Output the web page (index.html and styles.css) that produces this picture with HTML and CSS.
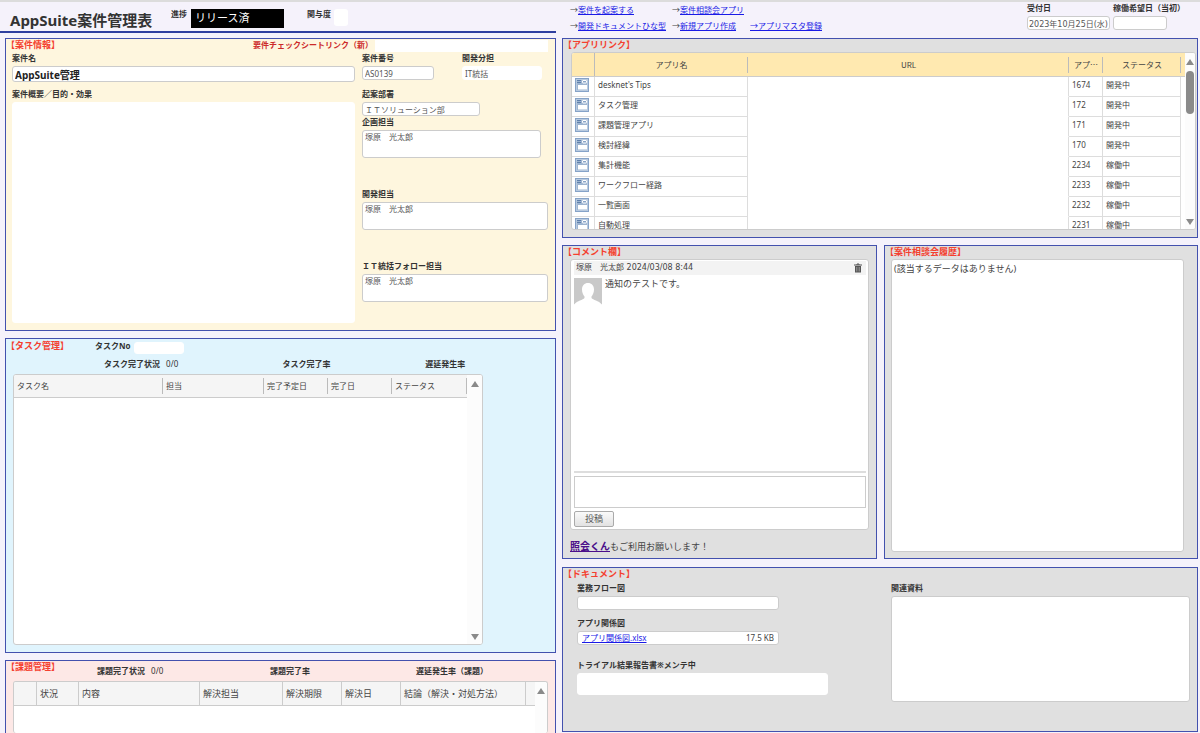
FILE: index.html
```
<!DOCTYPE html>
<html lang="ja">
<head>
  <meta charset="UTF-8" />
  <meta name="viewport" content="width=device-width, initial-scale=1.0"/>
  <title>AppSuite案件管理表</title>
  <link rel="stylesheet" href="styles.css">
</head>
<body>
  <svg width="0" height="0" class="sprite">
    <symbol id="app-icon" viewBox="0 0 14 14">
      <rect width="14" height="14" fill="#86a3c8"/>
      <rect x="1" y="1" width="12" height="12" fill="#b9cadf"/>
      <rect x="2" y="2" width="10" height="10" fill="#9db4d1"/>
      <path d="M2 2.500h4M2 4.500h4" stroke="#5f80ab" stroke-width="1"/>
      <rect x="7.500" y="2.500" width="4" height="2.500" rx=".5" fill="#8aa5c8" stroke="#fff" stroke-width="1"/>
      <rect x="3" y="7" width="9" height="4.500" fill="#fff"/>
    </symbol>
  </svg>

  <div class="page">
    <div class="left">
      <header class="title-bar">
        <h1>AppSuite案件管理表</h1>
        <span class="label">進捗</span>
        <span class="status">リリース済</span>
        <label class="label" for="level">関与度</label>
        <input class="level" id="level" type="text">
      </header>

      <section class="panel info">
        <div class="panel-head">
          <h2>【案件情報】</h2>
          <label class="label sheet-label" for="sheet">要件チェックシートリンク（新）</label>
          <input class="plain sheet" id="sheet" type="text">
        </div>
        <div class="info-body">
          <div class="info-main">
            <label class="label" for="name">案件名</label>
            <input class="box name" id="name" type="text" value="AppSuite管理">
            <label class="label" for="summary">案件概要／目的・効果</label>
            <textarea class="plain summary" id="summary"></textarea>
          </div>
          <div class="info-side">
            <div class="pair">
              <div class="number">
                <label class="label" for="number">案件番号</label>
                <input class="box" id="number" type="text" value="AS0139">
              </div>
              <div class="section">
                <label class="label" for="section">開発分担</label>
                <input class="plain" id="section" type="text" value="IT統括">
              </div>
            </div>
            <label class="label" for="dept">起案部署</label>
            <input class="box dept" id="dept" type="text" value="ＩＴソリューション部">
            <label class="label" for="planner">企画担当</label>
            <textarea class="box person planner" id="planner">塚原　光太郎</textarea>
            <label class="label" for="developer">開発担当</label>
            <textarea class="box person" id="developer">塚原　光太郎</textarea>
            <label class="label" for="follow">ＩＴ統括フォロー担当</label>
            <textarea class="box person" id="follow">塚原　光太郎</textarea>
          </div>
        </div>
      </section>

      <section class="panel task">
        <div class="panel-head">
          <h2>【タスク管理】</h2>
          <label class="label" for="taskno">タスクNo</label>
          <input class="plain taskno" id="taskno" type="text">
        </div>
        <div class="stats">
          <div><b>タスク完了状況</b> <span>0/0</span></div>
          <div><b>タスク完了率</b></div>
          <div><b>遅延発生率</b></div>
        </div>
        <div class="list task-list">
          <table>
            <thead>
              <tr>
                <th class="t-name">タスク名</th>
                <th>担当</th>
                <th class="t-date">完了予定日</th>
                <th class="t-date">完了日</th>
                <th class="t-status">ステータス</th>
              </tr>
            </thead>
          </table>
          <div class="scroll">
            <i class="up"></i>
            <i class="down"></i>
          </div>
        </div>
      </section>

      <section class="panel issue">
        <div class="panel-head">
          <h2>【課題管理】</h2>
          <div class="stats">
            <div><b>課題完了状況</b> <span>0/0</span></div>
            <div><b>課題完了率</b></div>
            <div><b>遅延発生率（課題）</b></div>
          </div>
        </div>
        <div class="list issue-list">
          <table>
            <thead>
              <tr>
                <th class="i-mark"></th>
                <th class="i-state">状況</th>
                <th>内容</th>
                <th class="i-owner">解決担当</th>
                <th class="i-date">解決期限</th>
                <th class="i-date">解決日</th>
                <th class="i-result">結論（解決・対処方法）</th>
                <th class="i-end"></th>
              </tr>
            </thead>
          </table>
          <div class="scroll">
            <i class="up"></i>
          </div>
        </div>
      </section>
    </div>

    <div class="right">
      <header class="tools">
        <nav>
          <span>→<a href="#">案件を起案する</a></span>
          <span>→<a href="#">案件相談会アプリ</a></span>
          <span></span>
          <span>→<a href="#">開発ドキュメントひな型</a></span>
          <span>→<a href="#">新規アプリ作成</a></span>
          <span><a href="#">→アプリマスタ登録</a></span>
        </nav>
        <div class="accepted">
          <label class="label" for="accepted">受付日</label>
          <input class="box" id="accepted" type="text" value="2023年10月25日(水)">
        </div>
        <div class="wish">
          <label class="label" for="wish">稼働希望日（当初）</label>
          <input class="box" id="wish" type="text">
        </div>
      </header>

      <section class="panel links">
        <h2>【アプリリンク】</h2>
        <div class="list app-list">
          <table>
            <thead>
              <tr>
                <th class="a-icon"></th>
                <th class="a-name">アプリ名</th>
                <th>URL</th>
                <th class="a-id">アプ…</th>
                <th class="a-status">ステータス</th>
                <th class="a-end"></th>
              </tr>
            </thead>
            <tbody>
              <tr><td><svg><use href="#app-icon"/></svg></td><td>desknet's Tips</td><td></td><td>1674</td><td>開発中</td><td></td></tr>
              <tr><td><svg><use href="#app-icon"/></svg></td><td>タスク管理</td><td></td><td>172</td><td>開発中</td><td></td></tr>
              <tr><td><svg><use href="#app-icon"/></svg></td><td>課題管理アプリ</td><td></td><td>171</td><td>開発中</td><td></td></tr>
              <tr><td><svg><use href="#app-icon"/></svg></td><td>検討経緯</td><td></td><td>170</td><td>開発中</td><td></td></tr>
              <tr><td><svg><use href="#app-icon"/></svg></td><td>集計機能</td><td></td><td>2234</td><td>稼働中</td><td></td></tr>
              <tr><td><svg><use href="#app-icon"/></svg></td><td>ワークフロー経路</td><td></td><td>2233</td><td>稼働中</td><td></td></tr>
              <tr><td><svg><use href="#app-icon"/></svg></td><td>一覧画面</td><td></td><td>2232</td><td>稼働中</td><td></td></tr>
              <tr><td><svg><use href="#app-icon"/></svg></td><td>自動処理</td><td></td><td>2231</td><td>稼働中</td><td></td></tr>
            </tbody>
          </table>
          <div class="scroll">
            <i class="up"></i>
            <i class="thumb"></i>
            <i class="down"></i>
          </div>
        </div>
      </section>

      <div class="middle">
        <section class="panel comments">
          <h2>【コメント欄】</h2>
          <div class="list comment-box">
            <div class="comment-list">
              <div class="comment-head">
                <span>塚原　光太郎 2024/03/08 8:44</span>
                <svg width="8" height="10" viewBox="0 0 8 10">
                  <path d="M0 2h8M3 2V1h2v1" fill="none" stroke="#555"/>
                  <path d="M1 3h6v6.500h-6z" fill="#555"/>
                  <path d="M2.800 4v4.500M5.200 4v4.500" stroke="#ccc" stroke-width=".6"/>
                </svg>
              </div>
              <div class="comment">
                <svg width="28" height="28" viewBox="0 0 28 28">
                  <rect width="28" height="28" fill="#c9c9c9"/>
                  <path d="M14 5c3.500 0 6 2.500 6 6.500 0 3-1.200 5.500-2.500 7v1.500c1.500 2 7 2.500 10.500 6.500v1.500H0v-1.500c3.500-4 9-4.500 10.500-6.500v-1.500c-1.300-1.500-2.500-4-2.500-7C8 7.500 10.500 5 14 5z" fill="#fff"/>
                </svg>
                <p>通知のテストです。</p>
              </div>
            </div>
            <textarea class="post-text" aria-label="コメント"></textarea>
            <button type="button">投稿</button>
          </div>
          <p class="note"><a href="#">照会くん</a>もご利用お願いします！</p>
        </section>

        <section class="panel history">
          <h2>【案件相談会履歴】</h2>
          <div class="list history-box">(該当するデータはありません)</div>
        </section>
      </div>

      <section class="panel docs">
        <h2>【ドキュメント】</h2>
        <div class="docs-body">
          <div>
            <label class="label" for="flow">業務フロー図</label>
            <input class="box flow" id="flow" type="text">
            <span class="label">アプリ関係図</span>
            <div class="box file"><a href="#">アプリ関係図.xlsx</a><span>17.5 KB</span></div>
            <label class="label" for="trial">トライアル結果報告書※メンテ中</label>
            <input class="plain trial" id="trial" type="text">
          </div>
          <div>
            <label class="label" for="related">関連資料</label>
            <textarea class="box related" id="related"></textarea>
          </div>
        </div>
      </section>
    </div>
  </div>
</body>
</html>
```
FILE: styles.css
```
* {
  box-sizing: border-box;
}
body {
  margin: 0;
  background: #f5f2fb;
  border-top: 2px solid #dcdcdc;
  font-family: "Noto Sans", "Noto Sans CJK JP", sans-serif;
  font-size: 8px;
  line-height: 12px;
  color: #444;
}
h1, h2, p {
  margin: 0;
}
a {
  color: #1a1ae6;
}
input, textarea, button {
  display: block;
  margin: 0;
  padding: 0 4px;
  font: inherit;
  color: #555;
  resize: none;
  outline: none;
}
.sprite {
  display: none;
}
.page {
  display: grid;
  grid-template-columns: 556fr 636fr;
  gap: 6px;
  padding-right: 2px;
}
.left {
  display: flex;
  flex-direction: column;
  min-height: calc(100vh - 2px);
}

/* shared parts */
.label {
  display: block;
  font-size: 8px;
  font-weight: bold;
  line-height: 12px;
  color: #333;
  white-space: nowrap;
}
.box, .plain {
  width: 100%;
  height: 14px;
  margin-top: 2px;
  background: #fff;
  border: 1px solid #ccc;
  border-radius: 3px;
}
.plain {
  border-color: #fff;
}
.panel {
  border: 1px solid #4351ae;
  background: #e0e0e0;
}
.panel h2 {
  font-size: 9px;
  line-height: 12px;
  color: #f4402f;
  white-space: nowrap;
}
.panel-head {
  display: flex;
}
.list {
  display: flex;
  background: #fff;
  border: 1px solid #ccc;
  border-radius: 3px;
  overflow: hidden;
}
.list table {
  flex: 1;
  align-self: flex-start;
  border-collapse: separate;
  border-spacing: 0;
  table-layout: fixed;
}
.list th {
  padding: 0 4px;
  font-family: "Noto Sans CJK JP", sans-serif;
  font-weight: normal;
  text-align: left;
  white-space: nowrap;
  background: #f5f5f5 linear-gradient(#bbb, #bbb) right center / 1px 16px no-repeat;
  border-bottom: 1px solid #ccc;
}
.scroll {
  flex: none;
  display: flex;
  flex-direction: column;
  align-items: center;
  width: 15px;
  padding: 6px 0 4px;
  background: #fcfcfc;
}
.scroll .up {
  border: 4px solid transparent;
  border-top: 0;
  border-bottom: 6px solid #8a8a8a;
}
.scroll .down {
  margin-top: auto;
  border: 4px solid transparent;
  border-bottom: 0;
  border-top: 6px solid #8a8a8a;
}
.scroll .thumb {
  width: 8px;
  height: 43px;
  margin-top: 6px;
  background: #8a8a8a;
  border-radius: 4px;
}

/* title bar */
.title-bar {
  display: flex;
  align-items: flex-start;
  height: 31px;
  padding-left: 10px;
  margin-bottom: 5px;
  border-bottom: 2px solid #2f3f9f;
}
.title-bar h1 {
  flex: 0 0 161px;
  margin-top: 8px;
  font-size: 15px;
  line-height: 20px;
  color: #333;
  white-space: nowrap;
}
.title-bar .label {
  margin-top: 6px;
}
.status {
  width: 93px;
  height: 19px;
  margin: 7px 23px 0 4px;
  padding-left: 4px;
  background: #000;
  color: #fff;
  font-size: 11px;
  line-height: 18px;
}
.level {
  width: 14px;
  height: 17px;
  margin: 7px 0 0 3px;
  padding: 0;
  background: #fff;
  border: 0;
  border-radius: 3px;
}

/* project info */
.info, .task, .issue {
  margin-left: 5px;
}
.info {
  padding: 0 7px 7px 0;
  background: #fef6de;
  margin-bottom: 7px;
}
.info .panel-head {
  height: 13px;
  justify-content: space-between;
}
.sheet-label {
  margin-left: auto;
  margin-right: 2px;
  color: #cc2a2a;
}
.sheet {
  flex: 0 0 173px;
  height: 12px;
  margin-top: 1px;
  border-radius: 0;
}
.info-body {
  display: grid;
  grid-template-columns: 343fr 186fr;
  gap: 7px;
  padding-left: 6px;
}
.name {
  height: 16px;
  margin-bottom: 6px;
  padding: 0 2px;
  font-size: 10px;
  font-weight: bold;
  color: #222;
}
.summary {
  height: 221px;
}
.pair {
  display: grid;
  grid-template-columns: 100fr 86fr;
  margin-bottom: 8px;
}
.info-side input {
  padding: 0 2px;
}
.number input {
  width: 72px;
}
.section input {
  width: 80px;
}
.dept {
  width: 118px;
}
.person {
  height: 28px;
  padding: 0 2px;
  line-height: 12px;
  margin-bottom: 30px;
}
.person:last-child {
  margin-bottom: 0;
}
.planner {
  width: 179px;
}

/* tasks */
.task {
  padding: 0 0 7px 7px;
  background: #e0f4fd;
  margin-bottom: 7px;
}
.task h2 {
  flex: 0 0 89px;
  margin-left: -7px;
}
.task .panel-head {
  height: 19px;
  padding-top: 1px;
}
.taskno {
  width: 50px;
  height: 12px;
  margin-left: 3px;
}
.stats {
  display: grid;
  color: #333;
}
.stats span {
  margin-left: 4px;
}
.task .stats {
  grid-template-columns: 179fr 143fr 130fr;
  height: 16px;
  padding-left: 91px;
}
.task-list {
  width: 470px;
  height: 271px;
}
.task-list th {
  height: 23px;
  padding: 0 3px;
}
.t-name {
  width: 149px;
}
.t-date {
  width: 64px;
}
.t-status {
  width: 75px;
}

/* issues */
.issue {
  flex: 1;
  padding: 0 7px 0 7px;
  background: #fde8e6;
  border-bottom: 0;
  margin-bottom: 0;
}
.issue h2 {
  flex: 0 0 91px;
  margin-left: -7px;
}
.issue .stats {
  flex: 1;
  grid-template-columns: 173fr 146fr 132fr;
  height: 20px;
  padding-top: 4px;
}
.issue-list {
  height: 52px;
  border-bottom: 0;
}
.issue-list th {
  height: 24px;
  padding: 0 3px;
  font-size: 9px;
  background: #f5f5f5;
  border-right: 1px solid #ccc;
}
.issue-list .i-end {
  border-right: 0;
}
.issue-list .scroll {
  width: 12px;
}
.i-mark {
  width: 23px;
}
.i-state {
  width: 42px;
}
.i-owner {
  width: 83px;
}
.i-date {
  width: 59px;
}
.i-result {
  width: 125px;
}
.i-end {
  width: 9px;
}

/* right header */
.tools {
  display: flex;
  height: 36px;
  padding: 0 13px 0 8px;
}
.tools nav {
  display: grid;
  grid-template-columns: 102px 78px auto;
  grid-auto-rows: 16px;
  line-height: 16px;
  white-space: nowrap;
}
.accepted {
  width: 83px;
  margin-left: auto;
  margin-right: 3px;
}
.accepted input {
  padding: 0 1px;
  font-family: "DejaVu Sans", "Noto Sans CJK JP", sans-serif;
}
.wish {
  width: 72px;
}
.wish input {
  width: 54px;
}

/* app links */
.links {
  padding: 0 1px 7px 0;
}
.app-list {
  height: 178px;
  margin: 1px 0 0 8px;
}
.app-list th {
  height: 24px;
  text-align: center;
  background-color: #ffe9b0;
}
.app-list .a-icon {
  background-size: 1px 100%;
}
.app-list td {
  height: 20px;
  padding: 0 3px 3px;
  border-right: 1px solid #ddd;
  border-bottom: 1px solid #ddd;
  white-space: nowrap;
}
.app-list td:nth-child(3) {
  border-bottom-color: #fff;
}
.app-list td:last-child {
  padding: 0;
  border: 0;
}
.app-list .a-end {
  padding: 0;
  background-image: none;
}
.app-list td svg {
  display: block;
  width: 14px;
  height: 14px;
}
.app-list .scroll {
  width: 10px;
}
.a-icon {
  width: 23px;
}
.a-name {
  width: 153px;
}
.a-id {
  width: 34px;
}
.a-status {
  width: 78px;
}
.a-end {
  width: 4px;
}

/* comments and history */
.middle {
  display: grid;
  grid-template-columns: 315fr 314fr;
  gap: 7px;
  margin: 7px 0 8px;
}
.comments {
  padding: 0 7px 5px 7px;
}
.comments h2 {
  margin-left: -7px;
}
.comment-box {
  display: block;
  margin-top: 1px;
  padding: 1px 2px 2px 3px;
}
.comment-list {
  height: 212px;
  border-bottom: 2px solid #ddd;
}
.comment-head {
  display: flex;
  justify-content: space-between;
  align-items: center;
  height: 14px;
  padding: 0 4px 0 2px;
  background: #f3f3f3;
  font-family: "DejaVu Sans", "Noto Sans CJK JP", sans-serif;
}
.comment {
  display: flex;
  gap: 3px;
  padding-top: 3px;
  font-size: 9px;
}
.post-text {
  width: 100%;
  height: 32px;
  margin: 3px 0;
  border: 1px solid #ccc;
}
.comments button {
  width: 40px;
  height: 16px;
  padding: 0;
  font-size: 9px;
  line-height: 12px;
  background: linear-gradient(#fafafa, #e2e2e2);
  border: 1px solid #aaa;
  border-radius: 2px;
  cursor: pointer;
}
.note {
  margin-top: 10px;
  font-size: 9px;
}
.note a {
  font-size: 10px;
  font-weight: bold;
  color: #4b0f8a;
}
.history {
  padding: 0 13px 5px 6px;
}
.history h2 {
  margin-left: -6px;
}
.history-box {
  height: 293px;
  margin-top: 1px;
  padding: 3px 2px;
  font-size: 9px;
}

/* documents */
.docs-body {
  display: grid;
  grid-template-columns: 314fr 299fr;
  padding: 2px 7px 29px 14px;
}
.flow, .file {
  width: 202px;
  margin-bottom: 7px;
}
.file {
  display: flex;
  justify-content: space-between;
  padding: 0 4px;
  margin-bottom: 14px;
}
.trial {
  width: 251px;
  height: 22px;
}
.related {
  height: 106px;
}
```
